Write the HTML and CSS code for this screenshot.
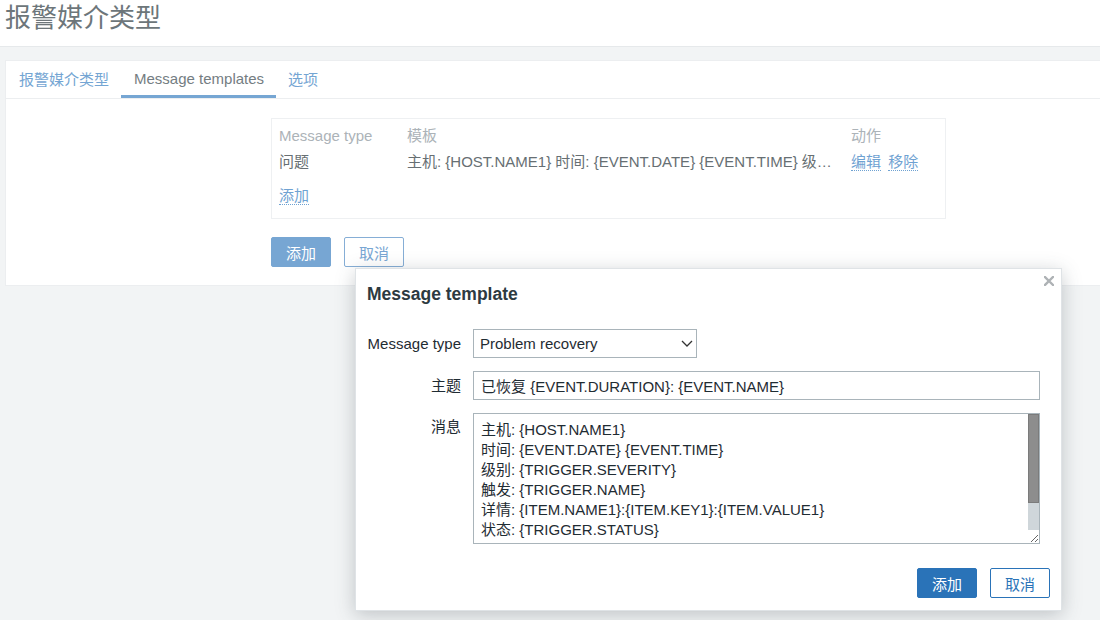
FILE: index.html
```html
<!DOCTYPE html>
<html lang="zh">
<head>
<meta charset="utf-8">
<title>报警媒介类型</title>
<link rel="stylesheet" href="styles.css">
</head>
<body>
<header class="page-header">
  <h1 class="page-title">报警媒介类型</h1>
</header>
<main class="page-main">
  <section class="card">
    <nav class="tabs">
      <a class="tab">报警媒介类型</a>
      <a class="tab tab-active">Message templates</a>
      <a class="tab">选项</a>
    </nav>
    <div class="tab-body">
      <div class="tpl-box">
        <table class="tpl-table">
          <thead>
            <tr>
              <th class="col-type">Message type</th>
              <th class="col-tpl">模板</th>
              <th class="col-act">动作</th>
            </tr>
          </thead>
          <tbody>
            <tr>
              <td>问题</td>
              <td>主机: {HOST.NAME1} 时间: {EVENT.DATE} {EVENT.TIME} 级…</td>
              <td class="actions"><a class="link">编辑</a> <a class="link">移除</a></td>
            </tr>
            <tr>
              <td class="add-cell" colspan="3"><a class="link">添加</a></td>
            </tr>
          </tbody>
        </table>
      </div>
      <div class="form-buttons">
        <button class="btn btn-primary-faded">添加</button>
        <button class="btn btn-alt-faded">取消</button>
      </div>
    </div>
  </section>
</main>

<div class="modal">
  <div class="modal-head">
    <h2 class="modal-title">Message template</h2>
    <button class="modal-close" aria-label="close">
      <svg width="10" height="10" viewBox="0 0 10 10"><path d="M1 1L9 9M9 1L1 9" stroke="#aeb2b5" stroke-width="2.4" stroke-linecap="square"/></svg>
    </button>
  </div>
  <div class="modal-body">
    <div class="form-grid">
      <label class="f-label">Message type</label>
      <div class="f-field">
        <div class="select-wrap">
          <select class="select">
            <option>Problem recovery</option>
          </select>
          <svg class="chevron" width="12" height="7" viewBox="0 0 12 7"><path d="M1 1L6 6L11 1" fill="none" stroke="#333" stroke-width="1.3"/></svg>
        </div>
      </div>
      <label class="f-label">主题</label>
      <div class="f-field">
        <input class="text-input" type="text" value="已恢复 {EVENT.DURATION}: {EVENT.NAME}">
      </div>
      <label class="f-label f-label-top">消息</label>
      <div class="f-field">
        <div class="textarea-wrap">
          <textarea class="textarea">主机: {HOST.NAME1}
时间: {EVENT.DATE} {EVENT.TIME}
级别: {TRIGGER.SEVERITY}
触发: {TRIGGER.NAME}
详情: {ITEM.NAME1}:{ITEM.KEY1}:{ITEM.VALUE1}
状态: {TRIGGER.STATUS}</textarea>
          <div class="scrollbar"><div class="scrollbar-thumb"></div></div>
        </div>
      </div>
    </div>
  </div>
  <div class="modal-foot">
    <button class="btn btn-primary">添加</button>
    <button class="btn btn-alt">取消</button>
  </div>
</div>
</body>
</html>
```

FILE: styles.css
```css
* { box-sizing: border-box; }
html, body { margin: 0; padding: 0; }
body {
  width: 1100px;
  height: 620px;
  overflow: hidden;
  background: #f2f4f5;
  font-family: "Liberation Sans", "Noto Sans CJK SC", sans-serif;
  font-size: 15px;
  color: #6d767a;
  position: relative;
}

.page-header {
  height: 47px;
  background: #fff;
  border-bottom: 1px solid #e6e9eb;
  padding: 2px 0 0 5px;
}
.page-title {
  margin: 0;
  font-weight: normal;
  font-size: 26px;
  line-height: 32px;
  color: #6d767a;
}

.page-main { padding: 13px 0 0 5px; }
.card {
  width: 1110px;
  height: 226px;
  background: #fff;
  border: 1px solid #eceef0;
}
.tabs {
  display: flex;
  height: 38px;
  border-bottom: 1px solid #eceef0;
  padding-left: 1px;
}
.tab {
  display: flex;
  align-items: center;
  padding: 1px 12px 0 12px;
  color: #74a5d3;
  border-bottom: 3px solid transparent;
  cursor: pointer;
}
.tab-active {
  color: #747d82;
  border-bottom-color: #76a6d3;
  padding: 1px 12px 0 13px;
}

.tab-body { padding: 19px 0 0 265px; }
.tpl-box {
  width: 675px;
  border: 1px solid #eef0f2;
  padding: 4px 8px 9px 7px;
}
.tpl-table {
  border-collapse: collapse;
  width: 100%;
}
.tpl-table th, .tpl-table td {
  text-align: left;
  padding: 4px 0;
  line-height: 18px;
  vertical-align: middle;
  white-space: nowrap;
}
.tpl-table th { font-weight: normal; color: #acb3b8; }
.tpl-table td { color: #676f73; }
.col-type { width: 128px; }
.col-tpl { width: 444px; }
.tpl-table td.add-cell { padding: 12px 0 4px; }
.link {
  color: #6fa2d2;
  border-bottom: 1px dotted #6fa2d2;
  cursor: pointer;
}
.actions { word-spacing: 3px; }

.form-buttons {
  display: flex;
  gap: 13px;
  margin-top: 18px;
}
.btn {
  width: 60px;
  height: 30px;
  border-radius: 2px;
  font-family: inherit;
  font-size: 15px;
  padding: 0;
  cursor: pointer;
}
.btn-primary-faded { background: #77a6d3; border: 1px solid #77a6d3; color: #fff; }
.btn-alt-faded { background: #fff; border: 1px solid #86aed6; color: #79a6d3; }
.btn-primary { background: #2a73b8; border: 1px solid #2a73b8; color: #fff; }
.btn-alt { background: #fff; border: 1px solid #2a73b8; color: #2a73b8; }

.modal {
  position: absolute;
  left: 355px;
  top: 268px;
  width: 707px;
  height: 343px;
  background: #fff;
  border: 1px solid #dfe3e6;
  box-shadow: 0 4px 18px rgba(60, 72, 80, 0.28);
  color: #1f2c33;
  display: flex;
  flex-direction: column;
}
.modal-head {
  position: relative;
  padding: 15px 12px 0 11px;
}
.modal-title {
  margin: 0;
  font-size: 17.5px;
  line-height: 20px;
  font-weight: bold;
  color: #2d3a41;
}
.modal-close {
  position: absolute;
  right: 5px;
  top: 5px;
  width: 14px;
  height: 14px;
  padding: 2px;
  border: 0;
  background: none;
  display: flex;
  align-items: center;
  justify-content: center;
}
.modal-body { padding: 25px 21px 0 11px; }
.form-grid {
  display: grid;
  grid-template-columns: 94px 1fr;
  column-gap: 12px;
  row-gap: 13px;
}
.f-label {
  text-align: right;
  align-self: center;
  line-height: 18px;
  color: #1f2c33;
}
.f-label-top { align-self: start; padding-top: 5px; }
.select-wrap {
  position: relative;
  width: 224px;
}
.select {
  appearance: none;
  -webkit-appearance: none;
  display: block;
  width: 224px;
  height: 29px;
  border: 1px solid #a9b4ba;
  border-radius: 0;
  background: #fff;
  font-family: inherit;
  font-size: 15px;
  color: #1f2c33;
  padding: 0 0 0 6px;
}
.chevron {
  position: absolute;
  right: 4px;
  top: 11px;
  pointer-events: none;
}
.text-input {
  display: block;
  width: 567px;
  height: 29px;
  border: 1px solid #a9b4ba;
  border-radius: 0;
  font-family: inherit;
  font-size: 15px;
  color: #1f2c33;
  padding: 0 7px;
}
.textarea-wrap {
  position: relative;
  width: 567px;
}
.textarea {
  display: block;
  width: 567px;
  height: 131px;
  border: 1px solid #a9b4ba;
  border-radius: 0;
  font-family: inherit;
  font-size: 15px;
  line-height: 20px;
  color: #1f2c33;
  padding: 6px 20px 6px 7px;
  overflow: hidden;
  resize: both;
}
.scrollbar {
  position: absolute;
  right: 1px;
  top: 1px;
  width: 11px;
  height: 116px;
  background: #cfd6da;
}
.scrollbar-thumb {
  height: 89px;
  background: #8d8d8d;
  border: 1px solid #7b7b7b;
}

.modal-foot {
  margin-top: auto;
  display: flex;
  justify-content: flex-end;
  gap: 13px;
  padding: 0 11px 12px 0;
}
```
